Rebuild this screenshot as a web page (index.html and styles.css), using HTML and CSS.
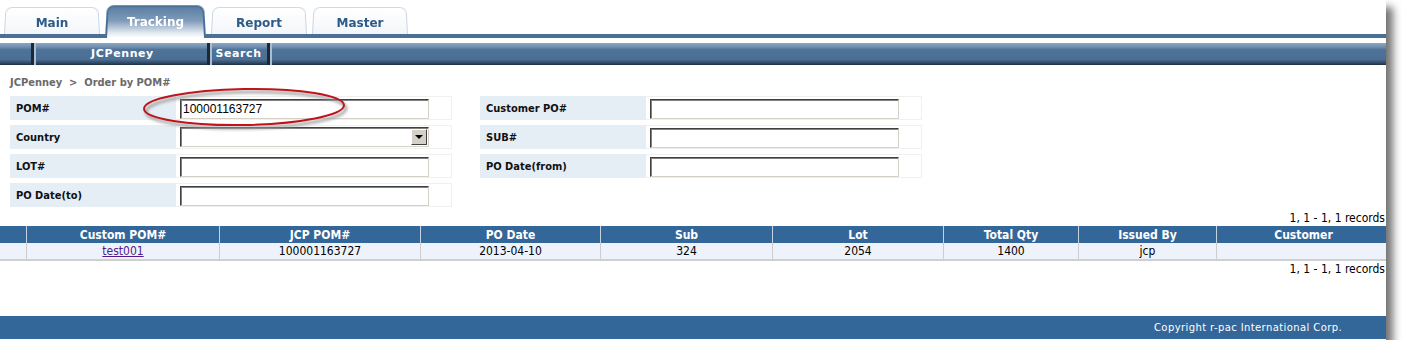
FILE: index.html
```html
<!DOCTYPE html>
<html lang="en">
<head>
    <meta charset="UTF-8">
    <title>Tracking - Order by POM#</title>
    <link rel="stylesheet" href="styles.css">
</head>
<body>

<div class="page">
    <!-- top tabs -->
    <div class="tabs">
        <a class="tab">Main</a>
        <a class="tab active">Tracking</a>
        <a class="tab">Report</a>
        <a class="tab">Master</a>
    </div>

    <!-- sub menu -->
    <div class="submenu">
        <span class="sub-item first"></span>
        <a class="sub-item jcp">JCPenney</a>
        <a class="sub-item search">Search</a>
        <span class="sub-item rest"></span>
    </div>

    <div class="content">
        <div class="crumb">JCPenney &nbsp;&gt;&nbsp; Order by POM#</div>

        <div class="search-area">
            <table class="form-table">
                <tr>
                    <td class="lbl">POM#</td>
                    <td class="fld"><input type="text" class="txt" value="100001163727"></td>
                </tr>
                <tr>
                    <td class="lbl">Country</td>
                    <td class="fld">
                        <div class="select">
                            <span class="select-val"></span>
                            <span class="select-btn"><span class="arrow"></span></span>
                        </div>
                    </td>
                </tr>
                <tr>
                    <td class="lbl">LOT#</td>
                    <td class="fld"><input type="text" class="txt"></td>
                </tr>
                <tr>
                    <td class="lbl">PO Date(to)</td>
                    <td class="fld"><input type="text" class="txt"></td>
                </tr>
            </table>

            <table class="form-table">
                <tr>
                    <td class="lbl">Customer PO#</td>
                    <td class="fld"><input type="text" class="txt"></td>
                </tr>
                <tr>
                    <td class="lbl">SUB#</td>
                    <td class="fld"><input type="text" class="txt"></td>
                </tr>
                <tr>
                    <td class="lbl">PO Date(from)</td>
                    <td class="fld"><input type="text" class="txt"></td>
                </tr>
            </table>

            <!-- red mark drawn around the POM# field -->
            <svg class="mark" width="230" height="50" viewBox="0 0 230 50">
                <defs>
                    <filter id="soft" x="-10%" y="-30%" width="120%" height="160%">
                        <feGaussianBlur stdDeviation="1.5"/>
                    </filter>
                </defs>
                <ellipse cx="108" cy="27" rx="100" ry="18" fill="none" stroke="#999" stroke-width="2.5" filter="url(#soft)" transform="rotate(-1 108 27)"/>
                <ellipse cx="106" cy="24" rx="100" ry="18" fill="none" stroke="#c0141c" stroke-width="2" transform="rotate(-1 106 24)"/>
            </svg>
        </div>
    </div>

    <div class="results">
        <div class="records">1, 1 - 1, 1 records</div>
        <table class="grid">
            <tr>
                <th class="c0"></th>
                <th class="c1">Custom POM#</th>
                <th class="c2">JCP POM#</th>
                <th class="c3">PO Date</th>
                <th class="c4">Sub</th>
                <th class="c5">Lot</th>
                <th class="c6">Total Qty</th>
                <th class="c7">Issued By</th>
                <th class="c8">Customer</th>
            </tr>
            <tr>
                <td></td>
                <td><a href="#" class="link">test001</a></td>
                <td>100001163727</td>
                <td>2013-04-10</td>
                <td>324</td>
                <td>2054</td>
                <td>1400</td>
                <td>jcp</td>
                <td></td>
            </tr>
        </table>
        <div class="records">1, 1 - 1, 1 records</div>
    </div>

    <div class="footer">Copyright r-pac International Corp.</div>
</div>

</body>
</html>
```

FILE: styles.css
```css
body {
    margin: 0;
    background-color: #fff;
    font-family: Tahoma, "DejaVu Sans Condensed", "Liberation Sans", sans-serif;
}
.page {
    position: relative;
    width: 1386px;
    height: 340px;
    overflow: hidden;
    display: flex;
    flex-direction: column;
    background-color: #fff;
    box-shadow: 7px 7px 8px rgba(0, 0, 0, 0.55);
}

/* tabs */
.tabs {
    display: flex;
    align-items: flex-end;
    gap: 5px;
    height: 34px;
    padding-left: 4px;
    border-bottom: 4px solid #4b7098;
}
.tab {
    position: relative;
    width: 96px;
    height: 28px;
    line-height: 34px;
    text-align: center;
    font-family: Verdana, "DejaVu Sans", sans-serif;
    font-size: 12px;
    font-weight: bold;
    color: #2e5a88;
    z-index: 1;
}
.tab::before {
    content: "";
    position: absolute;
    inset: 0;
    z-index: -1;
    border: 1px solid #c9d6e2;
    border-bottom: none;
    border-radius: 7px 7px 0 0;
    background: linear-gradient(#ffffff, #f3f6f9);
    transform: perspective(60px) rotateX(4deg);
    transform-origin: bottom;
}
.tab.active {
    width: 101px;
    height: 34px;
    line-height: 36px;
    margin-bottom: -4px;
    color: #fff;
}
.tab.active::before {
    border: 2px solid #4b7098;
    border-bottom: none;
    background: linear-gradient(#5c7fa5, #7f9bb9 45%, #e4ebf2 85%, #ffffff);
}

/* sub menu */
.submenu {
    display: flex;
    height: 22px;
    margin-top: 5px;
    background: linear-gradient(#8ea7c1, #6f8fb0 18%, #4f7398 30%, #4a6e94 75%, #34506e 88%, #1f2f40);
}
.sub-item {
    display: block;
    height: 22px;
    line-height: 21px;
    text-align: center;
    font-family: Verdana, "DejaVu Sans", sans-serif;
    font-size: 11px;
    font-weight: bold;
    letter-spacing: 0.6px;
    color: #fff;
    border-right: 3px solid #1b2836;
    box-shadow: inset 2px 0 0 #a9bed3;
}
.sub-item.first {
    width: 31px;
    box-shadow: none;
}
.sub-item.jcp {
    box-sizing: border-box;
    width: 176px;
    padding-left: 4px;
}
.sub-item.search {
    width: 57px;
}
.sub-item.rest {
    flex: 1;
    border-right: none;
}

/* search form */
.content {
    padding: 11px 10px 0;
}
.crumb {
    font-size: 11px;
    font-weight: bold;
    color: #6a6a6a;
    line-height: 14px;
}
.search-area {
    position: relative;
    display: flex;
    align-items: flex-start;
    gap: 28px;
    margin-top: 1px;
}
.form-table {
    width: 442px;
    border-collapse: separate;
    border-spacing: 0 5px;
}
.form-table td {
    height: 22px;
    padding: 0;
}
.lbl {
    width: 160px;
    padding-left: 6px !important;
    background-color: #e6eef5;
    font-size: 11px;
    font-weight: bold;
    color: #111;
}
.fld {
    border: 1px solid #f0f0f0;
    border-left: none;
    background-color: #fff;
}
.txt, .select {
    box-sizing: border-box;
    width: 249px;
    height: 20px;
    margin-left: 4px;
    padding: 0 2px;
    border: 1px solid;
    border-color: #404040 #d4d0c8 #d4d0c8 #404040;
    box-shadow: inset 1px 1px 0 #808080;
    font-family: "Liberation Sans", Arial, sans-serif;
    font-size: 12px;
    color: #000;
    outline: none;
}
.select {
    display: flex;
    justify-content: flex-end;
    align-items: stretch;
    padding: 1px;
}
.select-btn {
    width: 14px;
    display: flex;
    align-items: center;
    justify-content: center;
    background-color: #d4d0c8;
    border: 1px solid;
    border-color: #fff #404040 #404040 #fff;
}
.arrow {
    width: 0;
    height: 0;
    border-left: 4px solid transparent;
    border-right: 4px solid transparent;
    border-top: 4px solid #000;
}
.mark {
    position: absolute;
    left: 128px;
    top: -8px;
    pointer-events: none;
}

/* results */
.results {
    width: 1386px;
    margin-top: -2px;
}
.records {
    text-align: right;
    padding-right: 1px;
    font-size: 12px;
    line-height: 16px;
    color: #000;
}
.grid {
    width: 1390px;
    border-collapse: collapse;
    table-layout: fixed;
    border-bottom: 2px solid #cfcfcf;
}
.grid th {
    height: 17px;
    padding: 0;
    background-color: #336699;
    color: #fff;
    font-size: 12px;
    font-weight: bold;
    border-left: 1px solid #c5d2df;
}
.grid td {
    height: 16px;
    padding: 0;
    text-align: center;
    background-color: #eef3fb;
    font-size: 12px;
    color: #000;
    border-left: 1px solid #cccccc;
}
.grid th.c0, .grid tr td:first-child {
    border-left: none;
}
.c0 { width: 26px; }
.c1 { width: 192px; }
.c2 { width: 200px; }
.c3 { width: 179px; }
.c4 { width: 171px; }
.c5 { width: 170px; }
.c6 { width: 134px; }
.c7 { width: 137px; }
.link {
    color: #551a8b;
}

/* footer */
.footer {
    margin-top: auto;
    height: 23px;
    line-height: 23px;
    padding-right: 44px;
    text-align: right;
    background-color: #336699;
    border-bottom: 1px solid #fff;
    font-family: Verdana, "DejaVu Sans", sans-serif;
    font-size: 10px;
    letter-spacing: 0.4px;
    color: #fff;
}
```
